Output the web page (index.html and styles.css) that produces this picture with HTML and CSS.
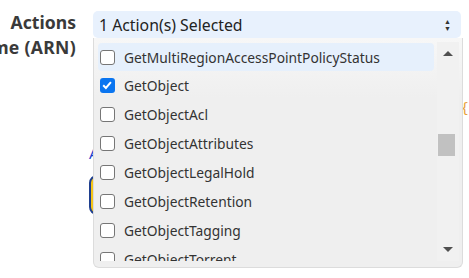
FILE: index.html
```html
<!DOCTYPE html>
<html lang="en">
<head>
    <meta charset="utf-8"/>
    <title>Policy Generator</title>
    <link rel="stylesheet" href="styles.css">
</head>
<body>
    <div class="form">
        <div class="row">
            <label class="label">Actions</label>
            <div class="field">
                <div class="select">
                    <span>1 Action(s) Selected</span>
                    <span class="arrows">&#9650;<br>&#9660;</span>
                </div>
            </div>
        </div>

        <div class="row">
            <label class="label second">Amazon Resource Name (ARN)</label>
            <div class="field">
                <div class="arn">
                    <span class="brace">{</span>
                </div>
                <a href="#" class="add-link">Add Conditions (Optional)</a>
                <button class="add-btn">Add Statement</button>
            </div>
        </div>

        <!-- open dropdown of the actions select -->
        <div class="dropdown">
            <div class="options">
                <label class="option hover"><span class="box"></span>GetMultiRegionAccessPointPolicyStatus</label>
                <label class="option"><span class="box checked"><svg viewBox="0 0 14 14" width="14" height="14"><path d="M3.2 7.3 L5.9 10 L10.9 4.2" fill="none" stroke="#fff" stroke-width="2"/></svg></span>GetObject</label>
                <label class="option"><span class="box"></span>GetObjectAcl</label>
                <label class="option"><span class="box"></span>GetObjectAttributes</label>
                <label class="option"><span class="box"></span>GetObjectLegalHold</label>
                <label class="option"><span class="box"></span>GetObjectRetention</label>
                <label class="option"><span class="box"></span>GetObjectTagging</label>
                <label class="option"><span class="box"></span>GetObjectTorrent</label>
            </div>
            <div class="scrollbar">
                <span class="arrow up"></span>
                <div class="track"><div class="thumb"></div></div>
                <span class="arrow down"></span>
            </div>
        </div>
    </div>
</body>
</html>
```

FILE: styles.css
```css
html, body {
    height: 100%;
}
body {
    margin: 0;
    padding: 0;
    font-family: "Noto Sans", "Open Sans", sans-serif;
    background-color: #fff;
    color: #333;
}
.form {
    position: relative;
    padding-top: 11px;
}
.row {
    display: flex;
    align-items: flex-start;
}
.label {
    width: 76px;
    flex-shrink: 0;
    text-align: right;
    white-space: nowrap;
    direction: rtl;
    overflow: hidden;
    font-weight: bold;
    font-size: 17.6px;
    color: #3a3a3a;
    line-height: 22px;
    padding-top: 0;
}
.label.second {
    margin-top: -2px;
    letter-spacing: 0.3px;
}
.field {
    margin-left: 17px;
    width: 368px;
}
.select {
    height: 27px;
    background-color: #e8f1fd;
    border-radius: 5px;
    display: flex;
    justify-content: space-between;
    align-items: center;
    padding: 0 10px 0 6px;
    font-size: 15.8px;
    color: #222;
    box-sizing: border-box;
}
.arrows {
    font-size: 7px;
    line-height: 7px;
    color: #333;
    text-align: center;
}
.arn {
    height: 105px;
    display: flex;
    justify-content: flex-end;
    align-items: center;
}
.brace {
    color: #e8a13c;
    font-family: "DejaVu Sans Mono", monospace;
    font-size: 14px;
    margin-right: -8px;
    margin-top: 35px;
}
.add-link {
    display: block;
    margin-left: -4px;
    margin-top: 0;
    color: #1a3ccc;
    font-size: 15px;
    line-height: 20px;
    text-decoration: none;
}
.add-btn {
    display: block;
    margin-left: -4px;
    margin-top: 12px;
    height: 40px;
    width: 150px;
    background-color: #f5c518;
    border: 2px solid #1f3f8f;
    border-radius: 8px;
    font-size: 15px;
}
.dropdown {
    position: absolute;
    left: 93px;
    top: 38px;
    width: 370px;
    height: 230px;
    box-sizing: border-box;
    border: 1px solid #dcdcdc;
    border-top: none;
    border-radius: 0 0 6px 6px;
    background: linear-gradient(#f7f7f7, #efefef 60px);
    display: flex;
    padding: 5px 3px 6px 4px;
    overflow: hidden;
}
.options {
    flex: 1;
    overflow: hidden;
}
.option {
    display: flex;
    align-items: center;
    height: 29px;
    padding-left: 2px;
    font-size: 13.8px;
    color: #333;
    white-space: nowrap;
    border-radius: 4px;
    margin-right: 3px;
}
.option.hover {
    background-color: #e6f0fc;
    height: 28px;
}
.box {
    width: 13px;
    height: 13px;
    border: 1px solid #767676;
    border-radius: 3px;
    background-color: #fff;
    margin-right: 9px;
    flex-shrink: 0;
    display: flex;
}
.box.checked {
    width: 15px;
    height: 15px;
    border: none;
    background-color: #0a75f0;
}
.scrollbar {
    width: 22px;
    display: flex;
    flex-direction: column;
    align-items: center;
    background-color: #f1f1f1;
    margin-top: -1px;
}
.arrow {
    width: 0;
    height: 0;
    border-left: 5px solid transparent;
    border-right: 5px solid transparent;
    margin: 9px 0;
}
.arrow.up {
    border-bottom: 5px solid #505050;
}
.arrow.down {
    border-top: 5px solid #505050;
}
.track {
    flex: 1;
    width: 100%;
    position: relative;
}
.thumb {
    position: absolute;
    top: 69px;
    left: 1px;
    width: 17px;
    height: 22px;
    background-color: #c1c1c1;
}
```
